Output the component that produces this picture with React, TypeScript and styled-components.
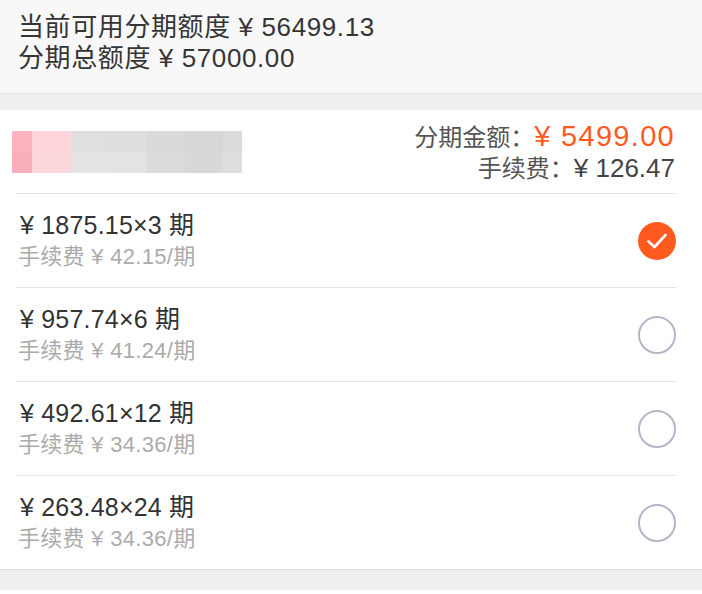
import { createGlobalStyle, styled } from "styled-components";

const GlobalStyle = createGlobalStyle`
  html, body {
    margin: 0;
    padding: 0;
    background: #ffffff;
  }

  body {
    font-family: "Liberation Sans", "Noto Sans CJK SC", sans-serif;
    -webkit-font-smoothing: antialiased;
  }
`;

const Page = styled.div`
  width: 702px;
  min-height: 594px;
  background: #ffffff;
`;

const Header = styled.div`
  height: 94px;
  box-sizing: border-box;
  padding: 12px 0 0 18px;
  background: #f8f8f8;
  border-bottom: 1px solid #e2e2e2;
  color: #353535;
  font-size: 26px;
  line-height: 31px;
  letter-spacing: 0.6px;
`;

const Band = styled.div<{ $height: number }>`
  height: ${p => p.$height}px;
  background: #efefef;
`;

const Card = styled.div`
  background: #ffffff;
  border-bottom: 1px solid #dedede;
`;

const Summary = styled.div`
  display: flex;
  justify-content: space-between;
  align-items: flex-start;
  padding: 10px 27px 9px 12px;
`;

const Mosaic = styled.svg`
  display: block;
  margin-top: 11px;
`;

const Amounts = styled.div`
  display: flex;
  flex-direction: column;
  align-items: flex-end;
`;

const AmountLine = styled.div`
  display: flex;
  align-items: baseline;
  height: 32px;
  line-height: 32px;
`;

const AmountLabel = styled.span`
  font-size: 24px;
  color: #555555;
`;

const AmountValue = styled.span<{ $accent?: boolean }>`
  font-size: ${p => (p.$accent ? "29px" : "26px")};
  letter-spacing: ${p => (p.$accent ? "1.3px" : "0")};
  color: ${p => (p.$accent ? "#ff5a1f" : "#444444")};
`;

const List = styled.div`
  padding: 0 26px 0 16px;
`;

const Row = styled.div`
  display: flex;
  align-items: center;
  justify-content: space-between;
  height: 94px;
  box-sizing: border-box;
  padding-left: 4px;
  border-top: 1px solid #e3e3e3;
`;

const PlanText = styled.div`
  display: flex;
  flex-direction: column;
`;

const PlanTitle = styled.div`
  font-size: 25px;
  line-height: 31px;
  color: #333333;
  letter-spacing: 0.2px;
`;

const PlanFee = styled.div`
  font-size: 22px;
  line-height: 31px;
  color: #ababab;
  margin-left: -2px;
  letter-spacing: 0.3px;
`;

const Radio = styled.div<{ $checked: boolean }>`
  width: 38px;
  height: 38px;
  box-sizing: border-box;
  border-radius: 50%;
  display: flex;
  align-items: center;
  justify-content: center;
  background: ${p => (p.$checked ? "#ff5a1f" : "transparent")};
  border: ${p => (p.$checked ? "none" : "2px solid #b3b6c8")};
`;

const mosaic = [
  ["#fbb4c0", "#fdd5db", "#dfdfdf", "#dedede", "#dadada", "#d7d7d7", "#dbdbdb"],
  ["#f9aebb", "#fbd7dc", "#e4e4e4", "#e3e3e3", "#dbdbdb", "#d8d8d8", "#dedede"],
];
const cols = [0, 20, 59, 96, 135, 173, 211, 230];

const plans = [
  { amount: "1875.15", count: 3, fee: "42.15", checked: true },
  { amount: "957.74", count: 6, fee: "41.24", checked: false },
  { amount: "492.61", count: 12, fee: "34.36", checked: false },
  { amount: "263.48", count: 24, fee: "34.36", checked: false },
];

function Check() {
  return (
    <svg width="22" height="18" viewBox="0 0 22 18">
      <path
        d="M2.5 9.5 L8.5 15 L19.5 3"
        fill="none"
        stroke="#ffffff"
        strokeWidth="2.6"
        strokeLinecap="round"
        strokeLinejoin="round"
      />
    </svg>
  );
}

export default function App() {
  return (
    <Page>
      <GlobalStyle />
      <Header>
        <div>当前可用分期额度 ¥ 56499.13</div>
        <div>分期总额度 ¥ 57000.00</div>
      </Header>
      <Band $height={16} />
      <Card>
        <Summary>
          <Mosaic width="230" height="42" viewBox="0 0 230 42">
            {mosaic.map((row, r) =>
              row.map((color, c) => (
                <rect
                  key={`${r}-${c}`}
                  x={cols[c]}
                  y={r * 21}
                  width={cols[c + 1] - cols[c]}
                  height="21"
                  fill={color}
                />
              ))
            )}
          </Mosaic>
          <Amounts>
            <AmountLine>
              <AmountLabel>分期金额：</AmountLabel>
              <AmountValue $accent>¥ 5499.00</AmountValue>
            </AmountLine>
            <AmountLine>
              <AmountLabel>手续费：</AmountLabel>
              <AmountValue>¥ 126.47</AmountValue>
            </AmountLine>
          </Amounts>
        </Summary>
        <List>
          {plans.map(plan => (
            <Row key={plan.count}>
              <PlanText>
                <PlanTitle>
                  ¥ {plan.amount}×{plan.count} 期
                </PlanTitle>
                <PlanFee>手续费 ¥ {plan.fee}/期</PlanFee>
              </PlanText>
              <Radio $checked={plan.checked}>{plan.checked && <Check />}</Radio>
            </Row>
          ))}
        </List>
      </Card>
      <Band $height={20} />
    </Page>
  );
}
